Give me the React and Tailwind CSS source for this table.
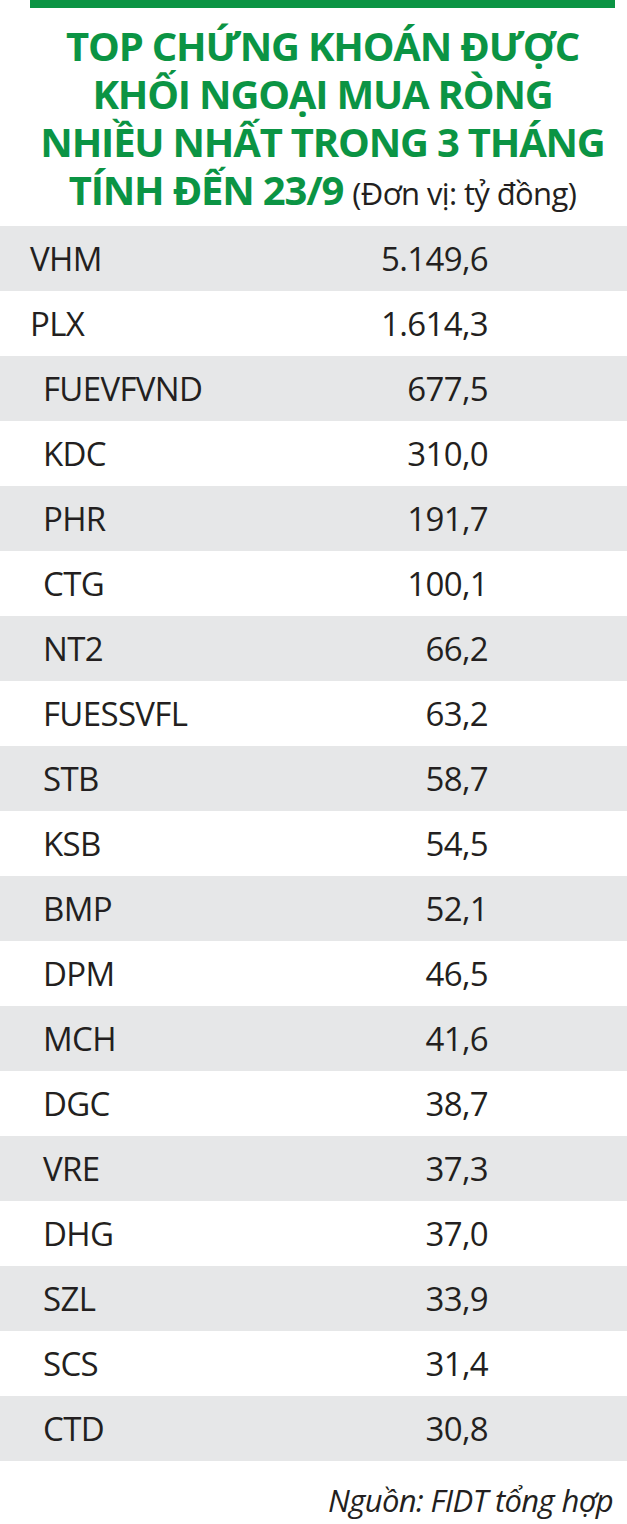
const rows = [
  ['VHM', '5.149,6', false],
  ['PLX', '1.614,3', false],
  ['FUEVFVND', '677,5', true],
  ['KDC', '310,0', true],
  ['PHR', '191,7', true],
  ['CTG', '100,1', true],
  ['NT2', '66,2', true],
  ['FUESSVFL', '63,2', true],
  ['STB', '58,7', true],
  ['KSB', '54,5', true],
  ['BMP', '52,1', true],
  ['DPM', '46,5', true],
  ['MCH', '41,6', true],
  ['DGC', '38,7', true],
  ['VRE', '37,3', true],
  ['DHG', '37,0', true],
  ['SZL', '33,9', true],
  ['SCS', '31,4', true],
  ['CTD', '30,8', true],
];

export default function App() {
  return (
    <div className="w-[627px] h-[1524px] bg-white text-[#231f20] font-['Open_Sans',sans-serif] overflow-hidden">
      <div className="ml-[30px] w-[585px] h-[8px] bg-[#0b9444]" />

      {/* tiêu đề */}
      <div className="ml-[30px] w-[585px] pt-[14px] h-[218px] text-center text-[#0b9444] font-bold text-[40px] leading-[48px] tracking-[-0.03em] whitespace-nowrap">
        <div>TOP CHỨNG KHOÁN ĐƯỢC</div>
        <div>KHỐI NGOẠI MUA RÒNG</div>
        <div>NHIỀU NHẤT TRONG 3 THÁNG</div>
        <div>
          TÍNH ĐẾN 23/9{' '}
          <span className="font-normal text-[31px] text-[#231f20] tracking-[-0.02em]">(Đơn vị: tỷ đồng)</span>
        </div>
      </div>

      {/* bảng */}
      <div className="flex flex-col">
        {rows.map(([code, val, indent], i) => (
          <div
            key={code}
            className={`flex items-center h-[65px] text-[33px] tracking-[-0.02em] ${i % 2 === 0 ? 'bg-[#e6e7e8]' : 'bg-white'}`}
          >
            <span className={indent ? 'pl-[43px]' : 'pl-[30px]'}>{code}</span>
            <span className="ml-auto pr-[139px] text-right">{val}</span>
          </div>
        ))}
      </div>

      <div className="pt-[16px] pr-[14px] text-right italic text-[31px] tracking-[-0.02em]">
        Nguồn: FIDT tổng hợp
      </div>
    </div>
  );
}
